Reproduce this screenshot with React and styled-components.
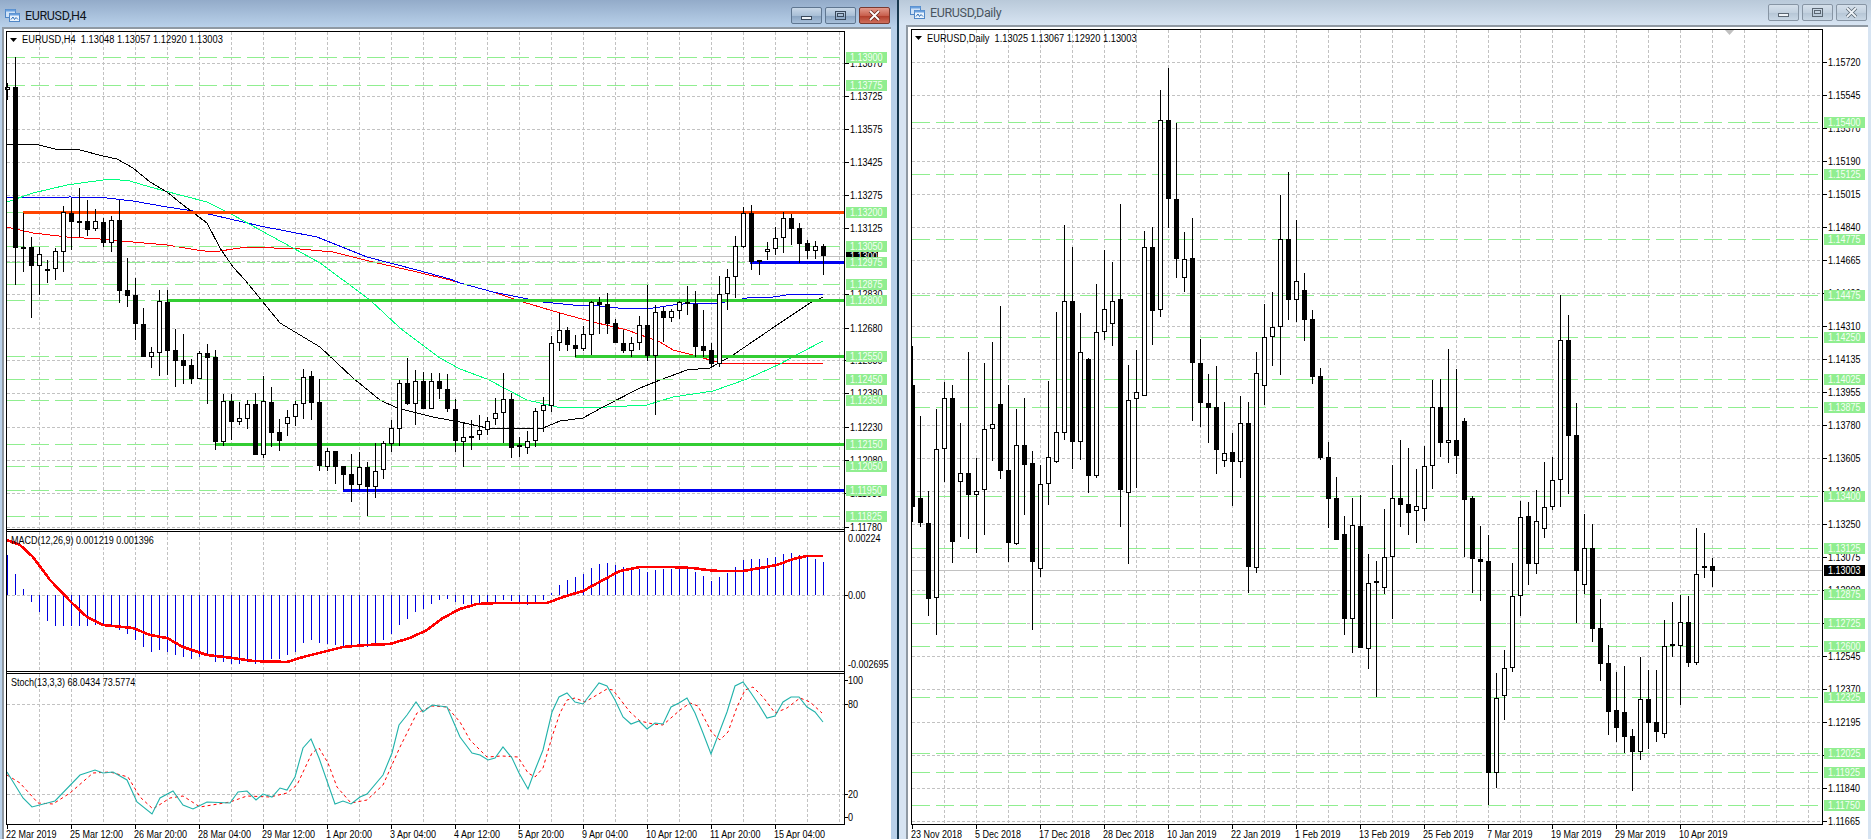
import React from "react"
import styled, { createGlobalStyle } from "styled-components"

const GlobalStyle = createGlobalStyle`
    html, body {
        margin: 0;
        padding: 0;
        background: #b9d1ea;
        overflow: hidden;
    }
`

const Desktop = styled.div`
    display: flex;
    width: 1871px;
    height: 839px;
`

const Window = styled.div`
    display: flex;
    flex-direction: column;
    box-sizing: border-box;
    height: 839px;
    width: ${p => p.$active ? "899px" : "972px"};
    background: ${p => p.$active ? "#b9d1ea" : "#d7e4f2"};
    border-right: ${p => p.$active ? "2px solid #17384f" : "none"};
`

const TitleBar = styled.div`
    display: flex;
    align-items: center;
    flex: none;
    box-sizing: border-box;
    height: ${p => p.$active ? "27px" : "25px"};
    padding: ${p => p.$active ? "3px 7px 0 5px" : "0 4px 0 11px"};
    background: ${p => p.$active
        ? "linear-gradient(#93abc9, #b9d1ea)"
        : "linear-gradient(#b9c9d9, #d7e4f2)"};
`

const TitleText = styled.span`
    flex: 1;
    margin-left: 5px;
    font: 12.5px Roboto, "Liberation Sans", sans-serif;
    letter-spacing: -0.35px;
    color: ${p => p.$active ? "#10151c" : "#4a5560"};
`

const Controls = styled.div`
    display: flex;
    gap: 3px;
`

const WinButton = styled.div`
    display: flex;
    align-items: center;
    justify-content: center;
    box-sizing: border-box;
    width: 31px;
    height: 17px;
    border-radius: 2px;
    border: 1px solid ${p => p.$close && p.$active ? "#7a3a30" : p.$active ? "#5f7690" : "#8795a4"};
    background: ${p => p.$close && p.$active
        ? "linear-gradient(#e39a8c, #c9604e 50%, #b23e2c 55%, #cf6f5c)"
        : p.$active
            ? "linear-gradient(#c9d8e8, #a9bfd6 50%, #8ba5c2 55%, #a8c0da)"
            : "linear-gradient(#d5e0eb, #c3d1df 50%, #b6c6d6 55%, #c9d7e5)"};
`

const ChartFrame = styled.div`
    flex: 1;
    display: flex;
    min-height: 0;
    border-top: 2px solid #8f99a3;
    border-left: 2px solid #8f99a3;
    margin-left: ${p => p.$active ? "2px" : "7px"};
    margin-right: ${p => p.$active ? "6px" : "3px"};
    background: #fff;
`

const ChartSvg = styled.svg`
    display: block;
    flex: 1;
`

const ChartText = styled.text`
    font: 11px "Liberation Sans", Arial, sans-serif;
    white-space: pre;
    fill: ${p => p.$color || "#000"};
`

const GREEN_DASH = "#90EE90"
const LIME = "#32CD32"
const ORANGE = "#FF4500"
const BLUE = "#0000F0"
const GRID = "#C2C2C2"

// hi, body top, body bottom, lo, filled (pixel rows read off the chart)
const h4Candles = [
    [83,87,90,100,0],[57,87,248,285,1],[213,247,248,272,1],[237,247,266,318,1],[247,254,266,295,0],[260,269,271,283,0],
    [248,251,269,280,0],[206,212,252,272,0],[198,213,222,250,1],[188,221,222,237,1],[200,221,230,236,1],[209,221,229,231,0],
    [218,222,243,247,1],[216,220,243,252,0],[200,220,291,303,1],[258,290,296,307,1],[278,295,324,340,1],[308,324,357,357,1],
    [347,352,357,368,0],[290,301,353,376,0],[290,302,351,375,1],[329,350,361,387,1],[334,360,366,384,1],[359,365,379,384,1],
    [351,353,379,379,0],[344,353,358,404,1],[350,357,442,450,1],[394,401,442,446,0],[394,401,422,440,1],[402,418,422,425,0],
    [400,404,419,429,0],[393,404,455,455,1],[376,401,455,458,0],[387,402,433,447,1],[419,432,441,451,1],[410,417,424,436,0],
    [401,404,417,426,0],[369,377,404,419,0],[371,376,403,420,1],[379,402,466,471,1],[448,451,467,471,0],[451,451,467,484,1],
    [466,466,475,490,1],[454,474,485,502,1],[452,467,485,490,0],[462,467,487,516,1],[443,471,487,498,0],[441,443,470,479,0],
    [420,428,444,452,0],[380,383,429,446,0],[358,383,404,405,1],[370,381,404,425,0],[372,381,409,409,1],[373,381,409,409,0],
    [373,381,389,399,1],[374,389,409,412,1],[399,409,441,452,1],[423,437,442,467,0],[420,436,437,450,1],[415,430,435,440,0],
    [417,421,430,435,0],[398,413,419,425,0],[373,399,413,443,0],[393,399,448,458,1],[437,445,447,457,0],[431,441,448,454,0],
    [408,411,441,447,0],[397,405,411,432,0],[336,343,406,412,0],[313,330,343,351,0],[327,330,345,351,1],[335,345,349,357,1],
    [326,334,349,351,0],[301,302,335,355,0],[297,302,305,334,1],[293,304,324,334,1],[319,323,343,343,1],[330,343,351,353,1],
    [337,343,351,357,0],[316,325,343,350,0],[285,325,356,361,1],[305,312,356,415,0],[307,311,318,342,1],[309,311,318,322,0],
    [301,302,311,319,0],[286,302,304,315,1],[291,304,347,357,1],[310,346,351,357,1],[343,350,364,368,1],[276,294,364,367,0],
    [269,277,294,310,0],[236,246,277,298,0],[207,213,247,248,0],[205,213,262,270,1],[260,260,261,275,1],[242,249,252,260,0],
    [227,238,249,255,0],[212,218,238,253,0],[214,218,229,245,1],[223,228,244,263,1],[240,243,251,259,1],[241,246,251,259,0],
    [244,246,256,275,1],
]

const dailyCandles = [
    [346,385,507,522,1],[416,498,523,527,1],[491,523,599,616,1],[409,449,598,635,0],[382,398,449,482,0],[385,398,542,563,1],
    [423,473,482,537,0],[352,473,495,539,1],[458,491,495,553,0],[363,429,490,535,0],[342,424,429,461,0],[306,404,471,479,1],
    [385,470,543,562,1],[409,445,544,545,0],[398,445,465,515,1],[451,463,562,630,1],[465,484,569,577,0],[381,457,484,505,0],
    [312,432,462,463,0],[225,301,433,440,0],[247,301,442,469,1],[313,352,442,460,0],[358,359,476,493,1],[284,332,476,478,0],
    [250,309,332,340,0],[262,301,324,346,0],[204,299,490,527,1],[365,400,493,564,0],[350,392,399,488,0],[231,247,396,396,0],
    [227,247,311,345,1],[90,120,310,317,0],[68,120,199,228,1],[123,199,259,278,1],[232,259,278,292,0],[218,258,363,421,1],
    [339,363,403,427,1],[374,403,408,443,1],[366,407,450,474,1],[402,453,461,467,0],[433,452,462,506,1],[396,423,462,478,0],
    [402,423,567,593,1],[352,373,568,573,0],[304,337,386,405,0],[292,327,337,366,0],[195,239,327,375,0],[172,239,300,320,1],
    [220,281,300,322,0],[273,290,320,341,1],[310,319,377,384,1],[368,376,458,460,1],[442,457,499,528,1],[477,498,540,540,1],
    [516,534,619,635,1],[498,525,619,653,0],[495,526,648,648,1],[554,583,649,669,0],[561,581,583,697,0],[509,557,588,594,0],
    [465,498,557,619,0],[440,498,505,527,1],[448,504,513,535,1],[469,506,511,543,0],[446,466,509,521,0],[380,407,466,489,0],
    [379,407,443,457,1],[349,440,443,463,0],[369,440,456,474,1],[418,421,500,557,1],[496,498,559,593,1],[526,559,562,601,1],
    [535,561,773,805,1],[673,698,773,788,0],[650,668,696,720,0],[563,596,668,672,0],[501,517,596,616,0],[502,516,564,585,1],
    [490,521,564,574,0],[462,507,529,538,0],[457,480,507,510,0],[295,340,480,507,0],[315,340,436,494,1],[403,435,571,623,1],
    [514,548,585,594,0],[524,548,629,642,1],[599,628,664,681,1],[645,663,712,735,1],[672,710,728,742,1],[666,712,737,753,1],
    [729,736,752,791,1],[657,699,752,760,0],[670,699,723,749,1],[670,722,732,742,1],[620,646,734,738,0],[602,644,646,657,0],
    [595,622,646,705,0],[596,622,663,667,1],[528,574,663,665,0],[533,566,567,578,1],[558,566,571,587,1],
]

const maBlack = [[7,144],[35,144],[55,149],[80,150],[103,156],[117,159],[133,168],[150,182],[167,192],[183,205],[207,223],[220,248],[233,267],[245,280],[280,323],[320,347],[353,378],[380,400],[397,408],[433,417],[460,422],[487,428],[543,428],[560,421],[583,418],[603,407],[640,388],[660,380],[687,370],[710,368],[733,355],[780,323],[810,303],[823,297]]
const maGreen = [[7,202],[33,193],[67,185],[110,179],[130,181],[150,187],[180,195],[207,202],[233,215],[260,230],[293,248],[320,263],[343,280],[370,300],[400,328],[440,358],[460,369],[487,379],[527,400],[557,407],[583,408],[607,407],[647,405],[673,397],[713,391],[747,379],[780,364],[800,353],[823,341]]
const maBlue = [[7,197],[33,198],[70,197],[107,198],[133,201],[167,207],[193,211],[213,215],[260,226],[317,237],[367,257],[417,270],[450,279],[460,283],[493,292],[523,298],[543,302],[573,305],[600,306],[627,309],[653,308],[673,305],[693,303],[720,303],[747,298],[773,297],[793,294],[823,294]]
const maRed = [[7,227],[33,233],[67,237],[100,239],[133,242],[167,245],[197,250],[213,252],[247,247],[300,249],[333,252],[373,262],[417,272],[450,280],[460,283],[493,292],[523,302],[560,313],[593,322],[627,330],[660,342],[673,350],[693,355],[720,363],[740,363],[760,363],[823,364]]

const macdBars = [555,574,589,602,612,621,626,626,626,626,626,625,625,626,630,634,640,647,652,650,652,655,657,659,657,655,662,662,664,664,662,664,661,659,659,655,652,643,640,643,644,645,646,646,646,647,645,640,634,625,619,612,609,604,600,599,602,604,606,603,603,603,600,601,603,605,602,600,593,585,580,577,574,568,564,563,565,567,569,569,572,570,569,569,568,568,572,576,581,577,573,567,560,559,559,558,557,554,553,555,556,559,562]
const macdSignal = [[7,540],[20,545],[33,557],[50,580],[72,603],[87,617],[103,625],[133,628],[150,635],[167,638],[183,647],[207,655],[233,658],[253,661],[287,662],[303,657],[323,652],[343,647],[367,645],[390,644],[410,638],[427,630],[443,618],[460,609],[477,604],[497,603],[547,603],[563,597],[583,591],[603,580],[620,571],[640,567],[670,567],[693,568],[707,570],[720,571],[743,571],[760,568],[777,565],[793,559],[807,556],[823,556]]

const stochMain = [[7,772],[23,798],[32,807],[55,801],[80,775],[95,770],[103,773],[113,772],[127,780],[137,802],[152,814],[160,798],[173,791],[183,805],[193,809],[207,802],[230,803],[238,792],[247,791],[256,800],[263,794],[272,797],[280,788],[287,790],[295,777],[303,748],[311,739],[319,758],[335,804],[343,801],[351,804],[360,797],[367,794],[383,775],[392,753],[399,725],[407,715],[416,702],[423,712],[432,705],[447,707],[460,737],[472,753],[480,755],[488,760],[495,758],[503,747],[512,758],[519,773],[528,789],[535,770],[543,750],[552,712],[559,697],[567,693],[575,702],[583,704],[599,683],[607,686],[615,700],[623,717],[631,724],[639,721],[647,729],[655,723],[663,724],[671,707],[679,703],[687,698],[695,713],[703,733],[711,754],[719,733],[727,712],[735,686],[743,682],[751,693],[759,705],[767,718],[775,716],[783,702],[791,697],[799,697],[807,707],[815,712],[823,722]]
const stochSignal = [[7,775],[20,783],[38,803],[53,804],[70,793],[93,773],[110,772],[128,777],[140,797],[153,809],[170,798],[183,796],[200,807],[230,802],[247,796],[270,797],[287,793],[297,785],[312,753],[319,748],[328,763],[337,787],[351,803],[367,800],[383,785],[400,747],[417,713],[432,706],[447,707],[460,722],[470,740],[487,757],[502,756],[518,757],[528,773],[535,777],[543,768],[552,737],[560,713],[567,700],[575,698],[585,702],[607,689],[613,690],[630,712],[640,721],[653,724],[663,725],[680,710],[690,703],[698,706],[712,733],[720,740],[728,732],[737,707],[745,690],[753,687],[763,697],[775,713],[787,708],[800,698],[810,702],[822,713]]

const h4Levels = [
    { y: 57, label: "1.13900" }, { y: 85, label: "1.13775" },
    { y: 212, label: "1.13200", color: ORANGE, from: 23 },
    { y: 246, label: "1.13050" },
    { y: 262, label: "1.12975", color: BLUE, from: 750 },
    { y: 284, label: "1.12875" },
    { y: 300, label: "1.12800", color: LIME, from: 167 },
    { y: 356, label: "1.12550", color: LIME, from: 575 },
    { y: 379, label: "1.12450" }, { y: 400, label: "1.12350" },
    { y: 444, label: "1.12150", color: LIME, from: 215 },
    { y: 466, label: "1.12050" },
    { y: 490, label: "1.11950", color: BLUE, from: 343 },
    { y: 516, label: "1.11825" },
]

const dailyLevels = [
    [122,"1.15400"],[174,"1.15125"],[239,"1.14775"],[295,"1.14475"],[337,"1.14250"],[379,"1.14025"],[407,"1.13875"],
    [496,"1.13400"],[548,"1.13125"],[594,"1.12875"],[623,"1.12725"],[646,"1.12600"],[697,"1.12325"],[753,"1.12025"],
    [772,"1.11925"],[805,"1.11750"],
].map(([y, label]) => ({ y, label }))

const h4Prices = [[63,"1.13870"],[96,"1.13725"],[129,"1.13575"],[162,"1.13425"],[195,"1.13275"],[228,"1.13125"],[294,"1.12830"],[328,"1.12680"],[360,"1.12530"],[393,"1.12380"],[427,"1.12230"],[460,"1.12080"],[493,"1.11930"],[527,"1.11780"]]
const dailyPrices = [[62,"1.15720"],[95,"1.15545"],[128,"1.15370"],[161,"1.15190"],[194,"1.15015"],[227,"1.14840"],[260,"1.14665"],[293,"1.14490"],[326,"1.14310"],[359,"1.14135"],[392,"1.13955"],[425,"1.13780"],[458,"1.13605"],[491,"1.13430"],[524,"1.13250"],[557,"1.13075"],[590,"1.12900"],[623,"1.12720"],[656,"1.12545"],[689,"1.12370"],[722,"1.12195"],[755,"1.12020"],[788,"1.11840"],[821,"1.11665"]]

const h4Dates = ["22 Mar 2019","25 Mar 12:00","26 Mar 20:00","28 Mar 04:00","29 Mar 12:00","1 Apr 20:00","3 Apr 04:00","4 Apr 12:00","5 Apr 20:00","9 Apr 04:00","10 Apr 12:00","11 Apr 20:00","15 Apr 04:00"]
const dailyDates = ["23 Nov 2018","5 Dec 2018","17 Dec 2018","28 Dec 2018","10 Jan 2019","22 Jan 2019","1 Feb 2019","13 Feb 2019","25 Feb 2019","7 Mar 2019","19 Mar 2019","29 Mar 2019","10 Apr 2019"]

const range = (from, to, step) => {
    const out = []
    for (let v = from; v <= to; v += step) out.push(v)
    return out
}

const pts = list => list.map(p => p.join(",")).join(" ")

// the reference font is narrower than anything installed, so squeeze it
const Label = ({ x, y, color, squeeze = 0.82, children }) =>
    <ChartText $color={color} transform={`translate(${x},${y + 4}) scale(${squeeze},1)`}>{children}</ChartText>

const Candle = ({ x, hi, top, bottom, lo, filled }) =>
    <g shapeRendering="crispEdges">
        <line x1={x + 0.5} x2={x + 0.5} y1={hi} y2={lo} stroke="#000" />
        {filled
            ? <rect x={x - 2} y={top} width={5} height={Math.max(bottom - top, 2)} fill="#000" />
            : <rect x={x - 1.5} y={top + 0.5} width={4} height={Math.max(bottom - top - 1, 1)} fill="#fff" stroke="#000" />}
    </g>

const Candles = ({ data, startX }) =>
    data.map((c, i) =>
        <Candle key={i} x={startX + 8 * i} hi={c[0]} top={c[1]} bottom={c[2]} lo={c[3]} filled={c[4]} />)

const Grid = ({ xs, ys, left, right, top, bottom }) =>
    <g stroke={GRID} strokeDasharray="3 2" shapeRendering="crispEdges">
        {ys.map(y => <line key={y} x1={left} x2={right} y1={y + 0.5} y2={y + 0.5} />)}
        {xs.map(x => <line key={x} x1={x + 0.5} x2={x + 0.5} y1={top} y2={bottom} />)}
    </g>

const Levels = ({ levels, left, dashEnd, right }) =>
    <g shapeRendering="crispEdges">
        {levels.map(l =>
            <line key={l.y} x1={left} x2={dashEnd} y1={l.y + 0.5} y2={l.y + 0.5} stroke={GREEN_DASH} strokeWidth="1" strokeDasharray="18 6" />)}
        {levels.filter(l => l.color).map(l =>
            <line key={l.y} x1={l.from} x2={right} y1={l.y + 0.5} y2={l.y + 0.5} stroke={l.color} strokeWidth="3" />)}
    </g>

const LevelTags = ({ levels, x }) =>
    levels.map(l =>
        <g key={l.y}>
            <rect x={x} y={l.y - 5} width={41} height={11} fill={GREEN_DASH} />
            <Label x={x + 4} y={l.y} color="#F4FFF4">{l.label}</Label>
        </g>)

const AxisPrices = ({ prices, axis, textX }) =>
    prices.map(([y, text]) =>
        <g key={y}>
            <line x1={axis} x2={axis + 4} y1={y + 0.5} y2={y + 0.5} stroke="#000" shapeRendering="crispEdges" />
            <Label x={textX} y={y}>{text}</Label>
        </g>)

const AxisDates = ({ dates, startX, bottom }) =>
    dates.map((d, i) => {
        const x = startX + 64 * i
        return <g key={d}>
            <line x1={x + 0.5} x2={x + 0.5} y1={bottom} y2={bottom + 4} stroke="#000" shapeRendering="crispEdges" />
            <Label x={x - 1} y={bottom + 9}>{d}</Label>
        </g>
    })

const Caret = ({ x, y }) => <polygon points={`${x},${y} ${x + 7},${y} ${x + 3.5},${y + 4}`} fill="#000" />

const WindowIcon = () =>
    <svg width="15" height="13" viewBox="0 0 15 13">
        <rect x="0.5" y="0.5" width="10" height="8" fill="#cfe2f7" stroke="#4f86c6" />
        <rect x="0.5" y="0.5" width="10" height="2" fill="#6aa0dd" />
        <rect x="4.5" y="4.5" width="10" height="8" fill="#eaf3fc" stroke="#4f86c6" />
        <rect x="4.5" y="4.5" width="10" height="2" fill="#6aa0dd" />
        <path d="M6 10.5 L8 8 L9.5 10.5 L11 8.5 L13 10.5" fill="none" stroke="#2f6fb8" />
    </svg>

const MinGlyph = ({ active }) =>
    <svg width="11" height="11" viewBox="0 0 11 11">
        <rect x="0.5" y="6.5" width="10" height="3" fill="#eef3f8" stroke={active ? "#39485a" : "#5a6672"} />
    </svg>

const MaxGlyph = ({ active }) =>
    <svg width="11" height="11" viewBox="0 0 11 11">
        <rect x="0.5" y="1.5" width="10" height="8" fill="none" stroke={active ? "#39485a" : "#5a6672"} />
        <rect x="2.5" y="3.5" width="6" height="3" fill="none" stroke={active ? "#39485a" : "#5a6672"} />
    </svg>

const CloseGlyph = ({ active }) =>
    <svg width="13" height="11" viewBox="0 0 13 11">
        <path d="M2 1 L11 10 M11 1 L2 10" stroke={active ? "#6a2a20" : "#5a6672"} strokeWidth="3.4" />
        <path d="M2 1 L11 10 M11 1 L2 10" stroke={active ? "#fff" : "#eef3f8"} strokeWidth="1.8" />
    </svg>

const ChartWindow = ({ title, active, viewBox, children }) =>
    <Window $active={active}>
        <TitleBar $active={active}>
            <WindowIcon />
            <TitleText $active={active}>{title}</TitleText>
            <Controls>
                <WinButton $active={active}><MinGlyph active={active} /></WinButton>
                <WinButton $active={active}><MaxGlyph active={active} /></WinButton>
                <WinButton $active={active} $close><CloseGlyph active={active} /></WinButton>
            </Controls>
        </TitleBar>
        <ChartFrame $active={active}>
            <ChartSvg viewBox={viewBox}>{children}</ChartSvg>
        </ChartFrame>
    </Window>

const H4Chart = () => {
    const xs = range(39, 839, 32)
    return <>
        <Grid xs={xs} ys={[...h4Prices.map(p => p[0]), 261]} left={7} right={844} top={32} bottom={529} />
        <Grid xs={xs} ys={[595]} left={7} right={844} top={532} bottom={671} />
        <Grid xs={xs} ys={[704, 794]} left={7} right={844} top={674} bottom={824} />
        <line x1={7} x2={844} y1={256.5} y2={256.5} stroke={GRID} shapeRendering="crispEdges" />

        <g fill="none" shapeRendering="crispEdges">
            <polyline points={pts(maRed)} stroke="#FF0000" />
            <polyline points={pts(maBlue)} stroke={BLUE} />
            <polyline points={pts(maGreen)} stroke="#00FF7F" />
            <polyline points={pts(maBlack)} stroke="#000" />
        </g>
        <Levels levels={h4Levels} left={7} dashEnd={840} right={844} />
        <Candles data={h4Candles} startX={7} />

        <g stroke="#0000E0" shapeRendering="crispEdges">
            {macdBars.map((y, i) => {
                const x = 7 + 8 * i + 0.5
                return <line key={i} x1={x} x2={x} y1={595} y2={y} />
            })}
        </g>
        <polyline points={pts(macdSignal)} fill="none" stroke="#FF0000" strokeWidth="2.6" shapeRendering="crispEdges" />

        <polyline points={pts(stochSignal)} fill="none" stroke="#FF0000" strokeDasharray="3 3" />
        <polyline points={pts(stochMain)} fill="none" stroke="#20B2AA" strokeWidth="1.1" />

        <g stroke="#000" fill="none" shapeRendering="crispEdges">
            <rect x={6.5} y={31.5} width={838} height={793} />
            <line x1={6} x2={845} y1={529.5} y2={529.5} />
            <line x1={6} x2={845} y1={531.5} y2={531.5} />
            <line x1={6} x2={845} y1={671.5} y2={671.5} />
            <line x1={6} x2={845} y1={673.5} y2={673.5} />
        </g>

        <Caret x={10} y={38} />
        <Label x={22} y={39} squeeze={0.845}>{"EURUSD,H4  1.13048 1.13057 1.12920 1.13003"}</Label>
        <Label x={11} y={540}>MACD(12,26,9) 0.001219 0.001396</Label>
        <Label x={11} y={682}>Stoch(13,3,3) 68.0434 73.5774</Label>

        <AxisPrices prices={h4Prices} axis={845} textX={850} />
        <rect x={846} y={250} width={32} height={12} fill="#000" />
        <Label x={850} y={256} color="#fff">1.13002</Label>
        <LevelTags levels={h4Levels} x={846} />

        <Label x={848} y={538}>0.00224</Label>
        <Label x={848} y={595}>0.00</Label>
        <Label x={848} y={664}>-0.002695</Label>
        <Label x={848} y={680}>100</Label>
        <Label x={848} y={704}>80</Label>
        <Label x={848} y={794}>20</Label>
        <Label x={848} y={817}>0</Label>
        <g stroke="#000" shapeRendering="crispEdges">
            {[595, 704, 794, 680, 817].map(y => <line key={y} x1={845} x2={848} y1={y + 0.5} y2={y + 0.5} />)}
        </g>

        <AxisDates dates={h4Dates} startX={7} bottom={825} />
    </>
}

const DailyChart = () =>
    <>
        <Grid xs={range(944, 1808, 32)} ys={dailyPrices.map(p => p[0])} left={912} right={1822} top={30} bottom={824} />
        <line x1={912} x2={1822} y1={570.5} y2={570.5} stroke={GRID} shapeRendering="crispEdges" />
        <Levels levels={dailyLevels} left={912} dashEnd={1818} right={1822} />
        <svg x={912} y={30} width={910} height={794} viewBox="912 30 910 794">
            <Candles data={dailyCandles} startX={912} />
        </svg>
        <rect x={911.5} y={29.5} width={911} height={795} fill="none" stroke="#000" shapeRendering="crispEdges" />
        <polygon points="1725,30 1734,30 1729.5,35" fill="#C0C0C0" />

        <Caret x={915} y={36} />
        <Label x={927} y={38} squeeze={0.845}>{"EURUSD,Daily  1.13025 1.13067 1.12920 1.13003"}</Label>

        <AxisPrices prices={dailyPrices} axis={1823} textX={1828} />
        <rect x={1824} y={565} width={41} height={11} fill="#000" />
        <Label x={1828} y={570} color="#fff">1.13003</Label>
        <LevelTags levels={dailyLevels} x={1824} />

        <AxisDates dates={dailyDates} startX={912} bottom={825} />
    </>

export default function App() {
    return (
        <>
            <GlobalStyle />
            <Desktop>
                <ChartWindow title="EURUSD,H4" active viewBox="4 29 887 810">
                    <H4Chart />
                </ChartWindow>
                <ChartWindow title="EURUSD,Daily" viewBox="908 27 960 812">
                    <DailyChart />
                </ChartWindow>
            </Desktop>
        </>
    )
}
